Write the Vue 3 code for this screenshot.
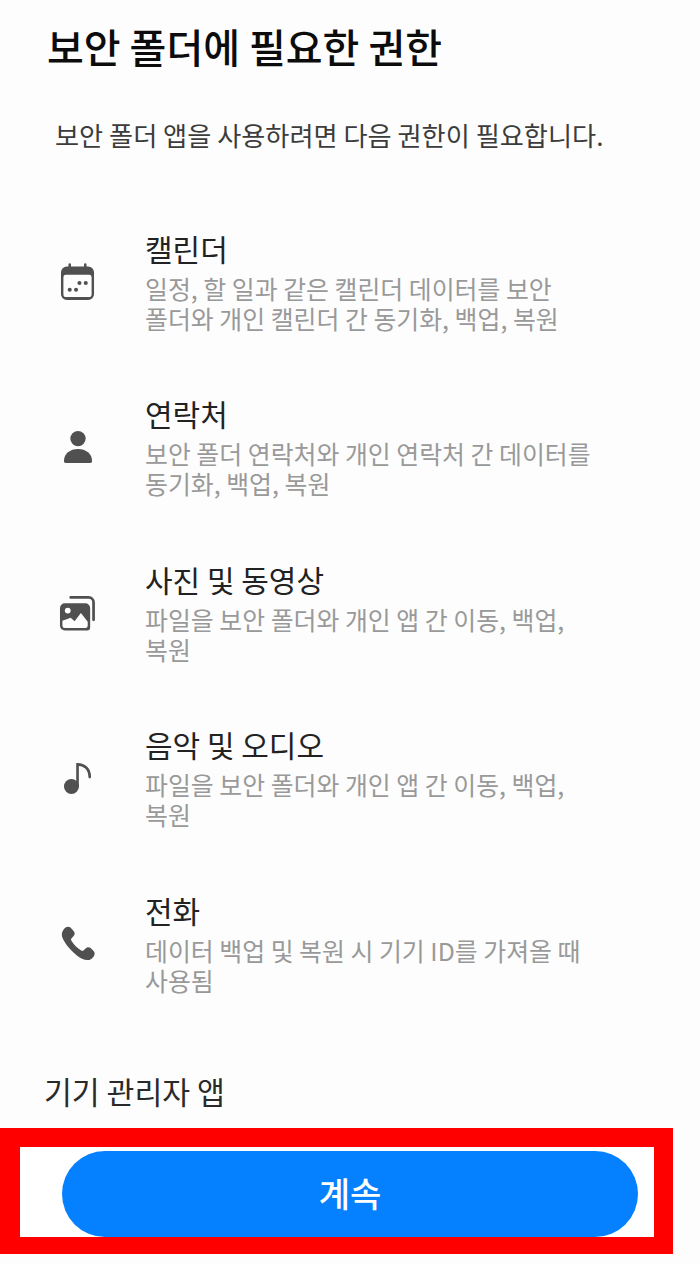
<script setup>
const items = [
  { key: 'cal', title: '캘린더', lines: ['일정, 할 일과 같은 캘린더 데이터를 보안', '폴더와 개인 캘린더 간 동기화, 백업, 복원'] },
  { key: 'person', title: '연락처', lines: ['보안 폴더 연락처와 개인 연락처 간 데이터를', '동기화, 백업, 복원'] },
  { key: 'photo', title: '사진 및 동영상', lines: ['파일을 보안 폴더와 개인 앱 간 이동, 백업,', '복원'] },
  { key: 'music', title: '음악 및 오디오', lines: ['파일을 보안 폴더와 개인 앱 간 이동, 백업,', '복원'] },
  { key: 'phone', title: '전화', lines: ['데이터 백업 및 복원 시 기기 ID를 가져올 때', '사용됨'] },
]
</script>

<template>
  <div class="page">
    <h1 class="heading">보안 폴더에 필요한 권한</h1>
    <p class="intro">보안 폴더 앱을 사용하려면 다음 권한이 필요합니다.</p>
    <ul class="list">
      <li v-for="item in items" :key="item.key" class="row">
        <div class="icon" :class="'icon-' + item.key">
          <svg v-if="item.key === 'cal'" viewBox="0 0 36 38" width="35" height="37">
            <path d="M10 1.500v5M26 1.500v5" stroke="#505050" stroke-width="2.600" stroke-linecap="round" fill="none"/>
            <path fill="#505050" fill-rule="evenodd" d="M7 3.500h22a6 6 0 0 1 6 6V32a6 6 0 0 1-6 6H7a6 6 0 0 1-6-6V9.500a6 6 0 0 1 6-6ZM6 12a2.500 2.500 0 0 0-2.500 2.500V32A3 3 0 0 0 6.500 35h23a3 3 0 0 0 3-3V14.500A2.500 2.500 0 0 0 30 12Z"/>
            <circle cx="20" cy="20.500" r="2.100" fill="#505050"/><circle cx="26.500" cy="20.500" r="2.100" fill="#505050"/>
            <circle cx="10" cy="27.500" r="2.100" fill="#505050"/><circle cx="16.500" cy="27.500" r="2.100" fill="#505050"/>
          </svg>
          <svg v-else-if="item.key === 'person'" viewBox="0 0 32 36" width="30" height="34">
            <circle cx="16" cy="9" r="8.200" fill="#505050"/>
            <path fill="#505050" d="M1 33c0-8 6.500-13 15-13s15 5 15 13c0 1.500-.8 2-2 2H3c-1.200 0-2-.5-2-2Z"/>
          </svg>
          <svg v-else-if="item.key === 'photo'" viewBox="0 0 38 36" width="37" height="36">
            <path d="M12 2h18.500a5 5 0 0 1 5 5v18" stroke="#505050" stroke-width="2.800" stroke-linecap="round" fill="none"/>
            <path fill="#505050" fill-rule="evenodd" d="M6 8h21a5 5 0 0 1 5 5v20a3 3 0 0 1-3 3H6a5 5 0 0 1-5-5V13a5 5 0 0 1 5-5ZM3.500 26v5A2.500 2.500 0 0 0 6 33.500h21a2.500 2.500 0 0 0 2.500-2.500v-4l-7-9-6.500 8.500-4-3.500Z"/>
            <circle cx="9" cy="15.500" r="3" fill="#fff"/>
          </svg>
          <svg v-else-if="item.key === 'music'" viewBox="0 0 32 36" width="30" height="34">
            <circle cx="9" cy="27" r="8" fill="#505050"/>
            <path d="M15.500 27V3.500c7 0 13 4.500 13 13.500" stroke="#505050" stroke-width="2.800" stroke-linecap="round" fill="none"/>
          </svg>
          <svg v-else viewBox="0 0 36 36" width="36" height="36">
            <path fill="#505050" d="M3 4.500C4.500 1.500 8-.5 10.500 1.500l3.300 3.800c1.400 1.800 1 3.500-.4 5l-2 2.200c-.5.600-.5 1.300 0 2.200 2.300 3.700 6 7.400 9.800 9.800.9.500 1.600.5 2.200 0l2.200-2c1.500-1.400 3.200-1.800 5-.4l3 2.800c2.300 2.300.6 6-2.300 8-2.700 1.800-6 1.400-9.300-.1C15 29 6.500 20.500 3 13 1.500 10 1.300 7.300 3 4.500Z"/>
          </svg>
        </div>
        <div class="text">
          <div class="title">{{ item.title }}</div>
          <div class="desc">
            <div v-for="line in item.lines" :key="line">{{ line }}</div>
          </div>
        </div>
      </li>
    </ul>
    <div class="admin">기기 관리자 앱</div>
    <div class="highlight">
      <button class="cta">계속</button>
    </div>
  </div>
</template>

<style>
html, body { margin: 0; background: #fdfdfd; }
</style>

<style scoped>
.page {
  width: 700px;
  height: 1264px;
  box-sizing: border-box;
  padding-top: 20px;
  background: #fdfdfd;
  font-family: "Noto Sans CJK KR", "Noto Sans", sans-serif;
  overflow: hidden;
}
.heading {
  margin: 0 0 0 47px;
  font-size: 40px;
  line-height: 52px;
  font-weight: 500;
  color: #0c0c0c;
}
.intro {
  margin: 45px 0 0 55px;
  font-size: 26.200px;
  line-height: 36px;
  font-weight: 400;
  color: #3c3c3c;
}
.list {
  list-style: none;
  margin: 44px 0 0;
  padding: 0;
}
.row {
  display: flex;
  align-items: center;
  height: 165.500px;
  box-sizing: border-box;
}
.icon {
  width: 145px;
  padding-left: 60px;
  padding-top: 4px;
  box-sizing: border-box;
  flex: none;
  display: flex;
}
.icon-person, .icon-music { padding-left: 63px; }
.icon-photo { padding-left: 59px; }
.icon svg { display: block; }
.text { flex: 1; min-width: 0; padding-top: 1px; }
.title {
  font-size: 30px;
  line-height: 40px;
  color: #222;
}
.desc {
  margin-top: 5px;
  font-size: 24.900px;
  line-height: 30px;
  color: #999;
}
.admin {
  margin: 46px 0 0 44px;
  font-size: 30.300px;
  line-height: 40px;
  color: #2a2a2a;
}
.highlight {
  width: 673px;
  height: 126px;
  margin-top: 17px;
  box-sizing: border-box;
  border: solid #fe0000;
  border-width: 19px 19px 17px 20px;
  background: #fff;
  padding: 4px 16px 0 42px;
}
.cta {
  display: block;
  width: 576px;
  height: 86px;
  border: 0;
  border-radius: 43px;
  background: #0580ff;
  color: #fff;
  font-family: inherit;
  font-size: 34px;
  font-weight: 500;
  padding: 0 0 3px;
}
</style>
